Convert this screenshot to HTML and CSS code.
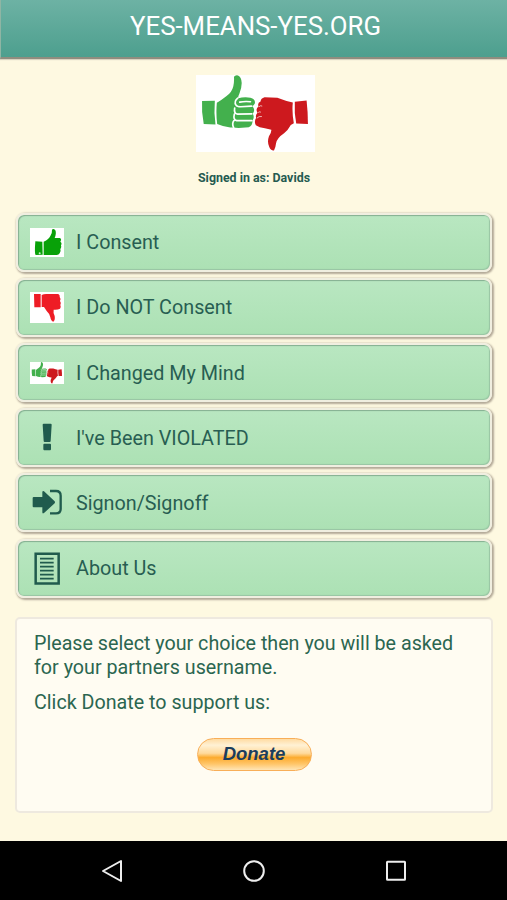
FILE: index.html
```html
<!DOCTYPE html>
<html lang="en">
<head>
<meta charset="utf-8">
<title>YES-MEANS-YES.ORG</title>
<link rel="stylesheet" href="styles.css">
</head>
<body>
<svg class="defs" aria-hidden="true">
  <symbol id="hands" viewBox="18 15 354 228">
    <g fill="#43b04d">
      <path d="M36 92L74 91Q71 126 76 162L41 160Q34 126 36 92Z"/>
      <path d="M80 97Q92 91 108 78Q125 66 129 48Q132 35 131 20Q135 14 143 16Q153 20 154 38Q154 53 147 70Q142 80 144 84Q160 79 180 82Q196 87 193 99Q190 105 185 107Q196 117 187 130Q193 141 186 150Q187 165 175 170L145 172Q130 170 120 171Q100 168 81 160Q77 128 80 97Z"/>
    </g>
    <g fill="none" stroke="#fff" stroke-width="5" stroke-linecap="round">
      <path d="M142 83Q130 93 137 104Q140 109 151 109L183 107M148 95Q164 92 180 94"/>
      <path d="M133 113Q130 129 142 131L184 130M132 131Q128 148 139 150L184 150M131 150Q124 159 130 171"/>
    </g>
    <g fill="#cd191e">
      <path d="M312 94L347 90Q351 125 351 160L316 159Q310 126 312 94Z"/>
      <path d="M306 96Q285 92 260 82L222 81Q211 84 210 93Q200 97 204 108Q194 115 201 127Q194 134 197 142Q190 153 196 164Q206 171 223 173L242 177Q243 185 235 197Q229 214 236 229Q240 240 250 239Q255 229 256 218Q259 202 280 188Q292 178 300 163L309 158Q303 125 306 96Z"/>
    </g>
    <path d="M199 143Q205 136 214 138M203 126Q207 123 211 125M205 109Q210 104 215 107" fill="none" stroke="#fff" stroke-width="2"/>
  </symbol>
</svg>

<header class="topbar"><h1>YES-MEANS-YES.ORG</h1></header>

<main class="content">
  <svg class="logo"><use href="#hands"/></svg>
  <p class="signed">Signed in as: Davids</p>

  <nav class="menu">
    <a class="item"><span class="icon"><svg class="pic" width="34" height="29" viewBox="60 69 102 87">
      <path fill="#08a108" d="M76 109L97 110L98 149L77 150Q73 146 76 109ZM101 110Q117 103 121 93Q127 86 126 74Q130 69 136 76Q140 85 134 99L150 99Q156 103 151 110Q157 114 153 121Q156 128 151 133Q154 140 149 145Q146 151 138 150L101 150Z"/>
      <circle cx="89" cy="145" r="3" fill="#c9efc9"/></svg></span>I Consent</a>
    <a class="item"><span class="icon"><svg class="pic" width="34" height="31" viewBox="60 261 102 93">
      <path fill="#ee1c25" d="M72 267L92 267L92 307L73 307ZM95 270Q102 266 113 267L143 267Q150 268 149 276Q154 282 150 288Q155 295 151 300Q154 306 150 311Q143 315 131 314Q129 323 134 333Q136 346 130 350Q123 349 121 337Q119 326 110 318L102 306L95 306Z"/></svg></span>I Do NOT Consent</a>
    <a class="item"><span class="icon"><svg class="pic" width="34" height="22"><use href="#hands"/></svg></span>I Changed My Mind</a>
    <a class="item"><span class="icon"><svg width="34" height="34" viewBox="60 252 102 102">
      <path fill="#205b4d" d="M98 263Q98 260 101 260L122 260Q125 260 125 263L122 312Q122 315 119 315L104 315Q101 315 101 312ZM103 320H120Q123 320 123 323V336Q123 340 120 340H103Q100 340 100 336V323Q100 320 103 320Z"/></svg></span>I've Been VIOLATED</a>
    <a class="item"><span class="icon"><svg width="34" height="34" viewBox="60 62 102 102">
      <path fill="#205b4d" d="M68 98Q68 95 71 95H97V80Q98 75 102 78L134 108Q136 111 134 114L102 143Q97 146 97 141V126H71Q68 126 68 123Z"/>
      <path fill="none" stroke="#205b4d" stroke-width="7" d="M120 77H138Q152 77 152 91V131Q152 144 138 144H120"/></svg></span>Signon/Signoff</a>
    <a class="item"><span class="icon"><svg width="34" height="34" viewBox="60 259 102 102">
      <path fill="none" stroke="#205b4d" stroke-width="7.5" d="M77 264.500H146V353.500H77Z"/>
      <path fill="none" stroke="#205b4d" stroke-width="5" d="M90 279H131M90 291H131M90 303H131M90 315H131M90 327H131M90 339H131"/></svg></span>About Us</a>
  </nav>

  <section class="panel">
    <p>Please select your choice then you will be asked<br>for your partners username.</p>
    <p>Click Donate to support us:</p>
    <button class="donate">Donate</button>
  </section>
</main>

<footer class="navbar">
  <svg width="22" height="24" viewBox="0 0 22 24"><path d="M2 12L20 2V22Z"/></svg>
  <svg width="24" height="24" viewBox="0 0 24 24"><circle cx="12" cy="12" r="9.8"/></svg>
  <svg width="22" height="24" viewBox="0 0 22 24"><rect x="2" y="2.8" width="18" height="18" rx=".5"/></svg>
</footer>
</body>
</html>
```
FILE: styles.css
```css
* { box-sizing: border-box; }
body {
  margin: 0;
  width: 507px;
  height: 900px;
  display: flex;
  flex-direction: column;
  overflow: hidden;
  background: #fef9e1;
  color: #2b6650;
  font-family: Roboto, sans-serif;
}
.defs { position: absolute; width: 0; height: 0; }
.topbar {
  height: 59px;
  flex: none;
  border-bottom: 2px solid #8f8d7f;
  border-left: 1px solid #8fb5a4;
  background: linear-gradient(#6db2a4, #4d9f8e);
  box-shadow: 0 1px 1px #d8d3c0;
}
h1 {
  margin: 0;
  padding-left: 3px;
  text-align: center;
  color: #fff;
  font-size: 25.8px;
  font-weight: 400;
  line-height: 53px;
}
.content {
  flex: 1;
  display: flex;
  flex-direction: column;
  padding: 16px 15px 0 16px;
}
.logo { width: 119px; height: 77px; margin-left: 180px; background: #fff; }
.signed {
  margin: 18px 0 0;
  text-align: center;
  font-size: 12.4px;
  line-height: 16px;
  font-weight: 700;
  color: #255b50;
}
.menu { display: grid; gap: 6.2px; margin-top: 26.7px; }
.item {
  display: flex;
  align-items: center;
  height: 59px;
  padding: 1px 0 0 12px;
  border: 2px solid #f0eee0;
  border-radius: 8px;
  background: linear-gradient(#b9e7c1, #ace1b4);
  box-shadow: inset 1px 1px 1px #84ae91, inset -1px -1px 1px #98c5a3, 1px 1px 2px 1px #b3a998;
  color: #285e52;
  font-size: 19.75px;
}
.icon { width: 34px; margin-right: 12px; display: flex; }
.pic { background: #fff; }
.panel {
  display: flex;
  flex-direction: column;
  height: 196px;
  margin: 19px -1px 0 -1px;
  padding: 13px 17px;
  border: 2px solid #eee9df;
  border-radius: 5px;
  background: #fffcf2;
  font-size: 19.7px;
  line-height: 24px;
}
.panel p { margin: 0 0 11px; white-space: nowrap; }
.donate {
  align-self: center;
  width: 115px;
  height: 33px;
  margin: 12px 0 0 0;
  padding: 0 0 1px;
  border: 1.5px solid #f8ae58;
  border-radius: 17px;
  background: linear-gradient(#ffdba2, #fff1d4 20%, #ffda9c 46%, #fcab2e 60%, #ffc568 80%, #ffe5b5);
  color: #1b3d5d;
  font: italic 700 18.5px "Liberation Sans", sans-serif;
}
.navbar {
  flex: none;
  height: 59px;
  display: flex;
  justify-content: space-between;
  align-items: center;
  padding: 0 100px 0 101px;
  background: #000;
}
.navbar svg { fill: none; stroke: #eee; stroke-width: 2; stroke-linejoin: round; }
```
